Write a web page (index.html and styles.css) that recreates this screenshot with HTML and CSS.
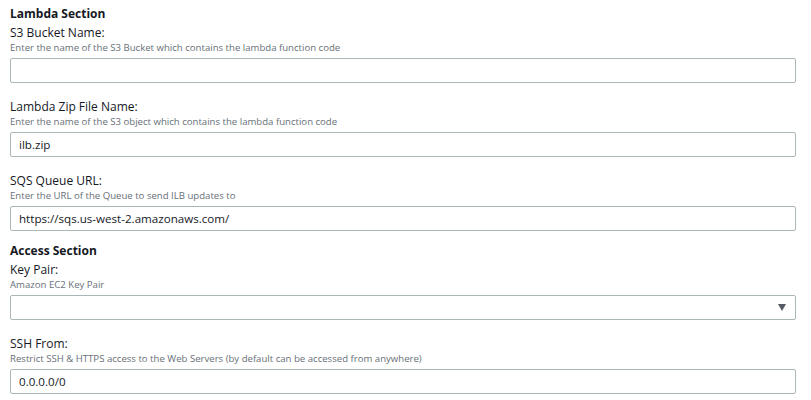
FILE: index.html
```html
<!DOCTYPE html>
<html lang="en">
<head>
<meta charset="utf-8">
<title>Parameters</title>
<link rel="stylesheet" href="styles.css">
</head>
<body>
<div class="form">
  <h3 class="section-title">Lambda Section</h3>
  <div class="field">
    <div class="label">S3 Bucket Name:</div>
    <div class="desc">Enter the name of the S3 Bucket which contains the lambda function code</div>
    <div class="input"></div>
  </div>
  <div class="field">
    <div class="label">Lambda Zip File Name:</div>
    <div class="desc">Enter the name of the S3 object which contains the lambda function code</div>
    <div class="input">ilb.zip</div>
  </div>
  <div class="field">
    <div class="label">SQS Queue URL:</div>
    <div class="desc">Enter the URL of the Queue to send ILB updates to</div>
    <div class="input">https://sqs.us-west-2.amazonaws.com/</div>
  </div>

  <h3 class="section-title second">Access Section</h3>
  <div class="field">
    <div class="label">Key Pair:</div>
    <div class="desc">Amazon EC2 Key Pair</div>
    <div class="input select"><span class="value"></span><span class="arrow"></span></div>
  </div>
  <div class="field">
    <div class="label">SSH From:</div>
    <div class="desc">Restrict SSH &amp; HTTPS access to the Web Servers (by default can be accessed from anywhere)</div>
    <div class="input">0.0.0.0/0</div>
  </div>
</div>
</body>
</html>
```

FILE: styles.css
```css
html, body {
  margin: 0;
  padding: 0;
  background: #ffffff;
}
body {
  font-family: "Open Sans", "Noto Sans", sans-serif;
  color: #16191f;
}
.form {
  padding: 5px 0 0 10px;
  width: 786px;
}
.section-title {
  margin: 0;
  font-size: 12px;
  font-weight: 700;
  line-height: 18px;
  color: #16191f;
}
.section-title.second {
  margin-top: 11px;
}
.field {
  display: flex;
  flex-direction: column;
  margin-top: 16px;
}
.section-title + .field {
  margin-top: 2px;
}
.label {
  font-size: 12px;
  line-height: 16px;
  color: #16191f;
}
.desc {
  font-size: 9.6px;
  line-height: 14px;
  color: #687078;
}
.input {
  box-sizing: border-box;
  margin-top: 3px;
  height: 25px;
  border: 1px solid #aab7b8;
  border-radius: 2px;
  padding: 0 8px;
  font-size: 11.6px;
  line-height: 23px;
  color: #16191f;
  background: #ffffff;
}
.select {
  display: flex;
  align-items: center;
  justify-content: space-between;
  padding-right: 9px;
}
.arrow {
  width: 0;
  height: 0;
  border-left: 4.5px solid transparent;
  border-right: 4.5px solid transparent;
  border-top: 7px solid #545b64;
}
```
